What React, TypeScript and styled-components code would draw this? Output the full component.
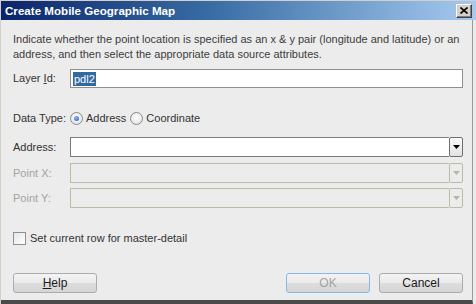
import * as React from "react";
import styled, { createGlobalStyle } from "styled-components";

const GlobalStyle = createGlobalStyle`
  html, body {
    margin: 0;
    padding: 0;
    background: #ececec;
  }
  body {
    font-family: "Liberation Sans", Arial, sans-serif;
    font-size: 11px;
    line-height: 15px;
    color: #333;
  }
`;

const Window = styled.div`
  width: 476px;
  height: 304px;
  box-sizing: border-box;
  display: flex;
  flex-direction: column;
  background: #ececec;
  border-left: 1px solid #d4d0c8;
  border-top: 1px solid #d4d0c8;
  overflow: hidden;
`;

const TitleBar = styled.div`
  height: 19px;
  flex: none;
  display: flex;
  align-items: center;
  justify-content: space-between;
  padding: 0 4px 0 4px;
  background: linear-gradient(to right, #0a246a 0%, #3a6ea5 45%, #a6caf0 100%);
`;

const Title = styled.span`
  color: #fff;
  font-weight: bold;
  font-size: 11.6px;
`;

const CloseButton = styled.div`
  width: 16px;
  height: 14px;
  box-sizing: border-box;
  display: flex;
  align-items: center;
  justify-content: center;
  background: #d4d0c8;
  border: 1px solid;
  border-color: #fff #404040 #404040 #fff;
  box-shadow: inset -1px -1px 0 #808080;
`;

const Body = styled.div`
  flex: 1;
  display: flex;
  flex-direction: column;
  padding: 12px 9px 0 12px;
  border-right: 1px solid #9a9a9a;
  border-bottom: 4px solid #4a4a4a;
  margin-right: 3px;
`;

const Description = styled.p`
  margin: 0;
  line-height: 15px;
  color: #3c3c3c;
`;

const Row = styled.div<{ $top: number }>`
  display: flex;
  align-items: center;
  margin-top: ${(p) => p.$top}px;
`;

const Label = styled.span<{ $disabled?: boolean }>`
  width: 57px;
  flex: none;
  white-space: nowrap;
  color: ${(p) => (p.$disabled ? "#a3a3a3" : "#333")};
`;

const TextBox = styled.div`
  flex: 1;
  height: 19px;
  box-sizing: border-box;
  border: 1px solid #8e8f8f;
  background: #fff;
  display: flex;
  align-items: center;
  padding-left: 2px;
`;

const Selection = styled.span`
  background: #3369a0;
  color: #fff;
  padding: 0 1px;
  line-height: 14px;
`;

const Combo = styled.div`
  flex: 1;
  height: 20px;
  display: flex;
  box-sizing: border-box;
`;

const ComboField = styled.div<{ $disabled?: boolean }>`
  flex: 1;
  box-sizing: border-box;
  border: 1px solid ${(p) => (p.$disabled ? "#bcbca6" : "#7b7b7b")};
  border-right: none;
  background: ${(p) => (p.$disabled ? "#ececec" : "#fff")};
`;

const ComboArrow = styled.div<{ $disabled?: boolean }>`
  width: 14px;
  flex: none;
  box-sizing: border-box;
  border: 1px solid ${(p) => (p.$disabled ? "#bcbca6" : "#6f6f6f")};
  border-radius: 2px;
  background: ${(p) =>
    p.$disabled ? "#ececec" : "linear-gradient(#fafafa, #e2e2e2)"};
  display: flex;
  align-items: center;
  justify-content: center;
`;

const RadioGroup = styled.div`
  display: flex;
  align-items: center;
  gap: 4px;
`;

const RadioOption = styled.label`
  display: flex;
  align-items: center;
  gap: 3px;
`;

const RadioCircle = styled.span<{ $checked?: boolean }>`
  width: 13px;
  height: 13px;
  box-sizing: border-box;
  border-radius: 50%;
  border: 1px solid #8a8a8a;
  background: radial-gradient(circle at 50% 40%, #ffffff, #dcdcdc);
  display: flex;
  align-items: center;
  justify-content: center;

  &::after {
    content: "";
    display: ${(p) => (p.$checked ? "block" : "none")};
    width: 5px;
    height: 5px;
    border-radius: 50%;
    background: radial-gradient(circle at 40% 35%, #8fb6f5, #2456c4);
  }
`;

const CheckRow = styled.label`
  display: flex;
  align-items: center;
  gap: 4px;
  margin-top: 23px;
`;

const CheckBox = styled.span`
  width: 13px;
  height: 13px;
  box-sizing: border-box;
  border: 1px solid #8f8f8f;
  background: linear-gradient(135deg, #e6e6e6, #ffffff);
`;

const Footer = styled.div`
  display: flex;
  align-items: center;
  margin-top: 27px;
`;

const Spacer = styled.div`
  flex: 1;
`;

const Button = styled.button<{ $default?: boolean }>`
  width: 84px;
  height: 20px;
  margin-left: ${(p) => (p.$default ? "0" : "9px")};
  box-sizing: border-box;
  font-family: inherit;
  font-size: 12px;
  padding: 0;
  border-radius: 3px;
  border: 1px solid ${(p) => (p.$default ? "#86b8ea" : "#acacac")};
  background: linear-gradient(#f3f3f3 0%, #ebebeb 50%, #dddddd 51%, #d5d5d5 100%);
  color: ${(p) => (p.$default ? "#a3a3a3" : "#1a1a1a")};

  &:first-child {
    margin-left: 0;
  }
`;

const Mnemonic = styled.span`
  text-decoration: underline;
`;

const Arrow = ({ color }: { color: string }) => (
  <svg width="7" height="4" viewBox="0 0 7 4">
    <path d="M0 0h7L3.5 4z" fill={color} />
  </svg>
);

const App = () => {
  return (
    <>
      <GlobalStyle />
      <Window>
        <TitleBar>
          <Title>Create Mobile Geographic Map</Title>
          <CloseButton>
            <svg width="8" height="7" viewBox="0 0 8 7">
              <path d="M0.5 0.5L7.5 6.5M7.5 0.5L0.5 6.5" stroke="#000" strokeWidth="1.6" />
            </svg>
          </CloseButton>
        </TitleBar>
        <Body>
          <Description>
            Indicate whether the point location is specified as an x &amp; y pair
            (longitude and latitude) or an address, and then select the
            appropriate data source attributes.
          </Description>
          <Row $top={7}>
            <Label>
              Layer <Mnemonic>I</Mnemonic>d:
            </Label>
            <TextBox>
              <Selection>pdl2</Selection>
            </TextBox>
          </Row>
          <Row $top={23}>
            <Label>Data Type:</Label>
            <RadioGroup>
              <RadioOption>
                <RadioCircle $checked />
                Address
              </RadioOption>
              <RadioOption>
                <RadioCircle />
                Coordinate
              </RadioOption>
            </RadioGroup>
          </Row>
          <Row $top={11}>
            <Label>Address:</Label>
            <Combo>
              <ComboField />
              <ComboArrow>
                <Arrow color="#000" />
              </ComboArrow>
            </Combo>
          </Row>
          <Row $top={6}>
            <Label $disabled>Point X:</Label>
            <Combo>
              <ComboField $disabled />
              <ComboArrow $disabled>
                <Arrow color="#b5b5a5" />
              </ComboArrow>
            </Combo>
          </Row>
          <Row $top={5}>
            <Label $disabled>Point Y:</Label>
            <Combo>
              <ComboField $disabled />
              <ComboArrow $disabled>
                <Arrow color="#b5b5a5" />
              </ComboArrow>
            </Combo>
          </Row>
          <CheckRow>
            <CheckBox />
            Set current row for master-detail
          </CheckRow>
          <Footer>
            <Button>
              <Mnemonic>H</Mnemonic>elp
            </Button>
            <Spacer />
            <Button $default>OK</Button>
            <Button>Cancel</Button>
          </Footer>
        </Body>
      </Window>
    </>
  );
};

export default App;
